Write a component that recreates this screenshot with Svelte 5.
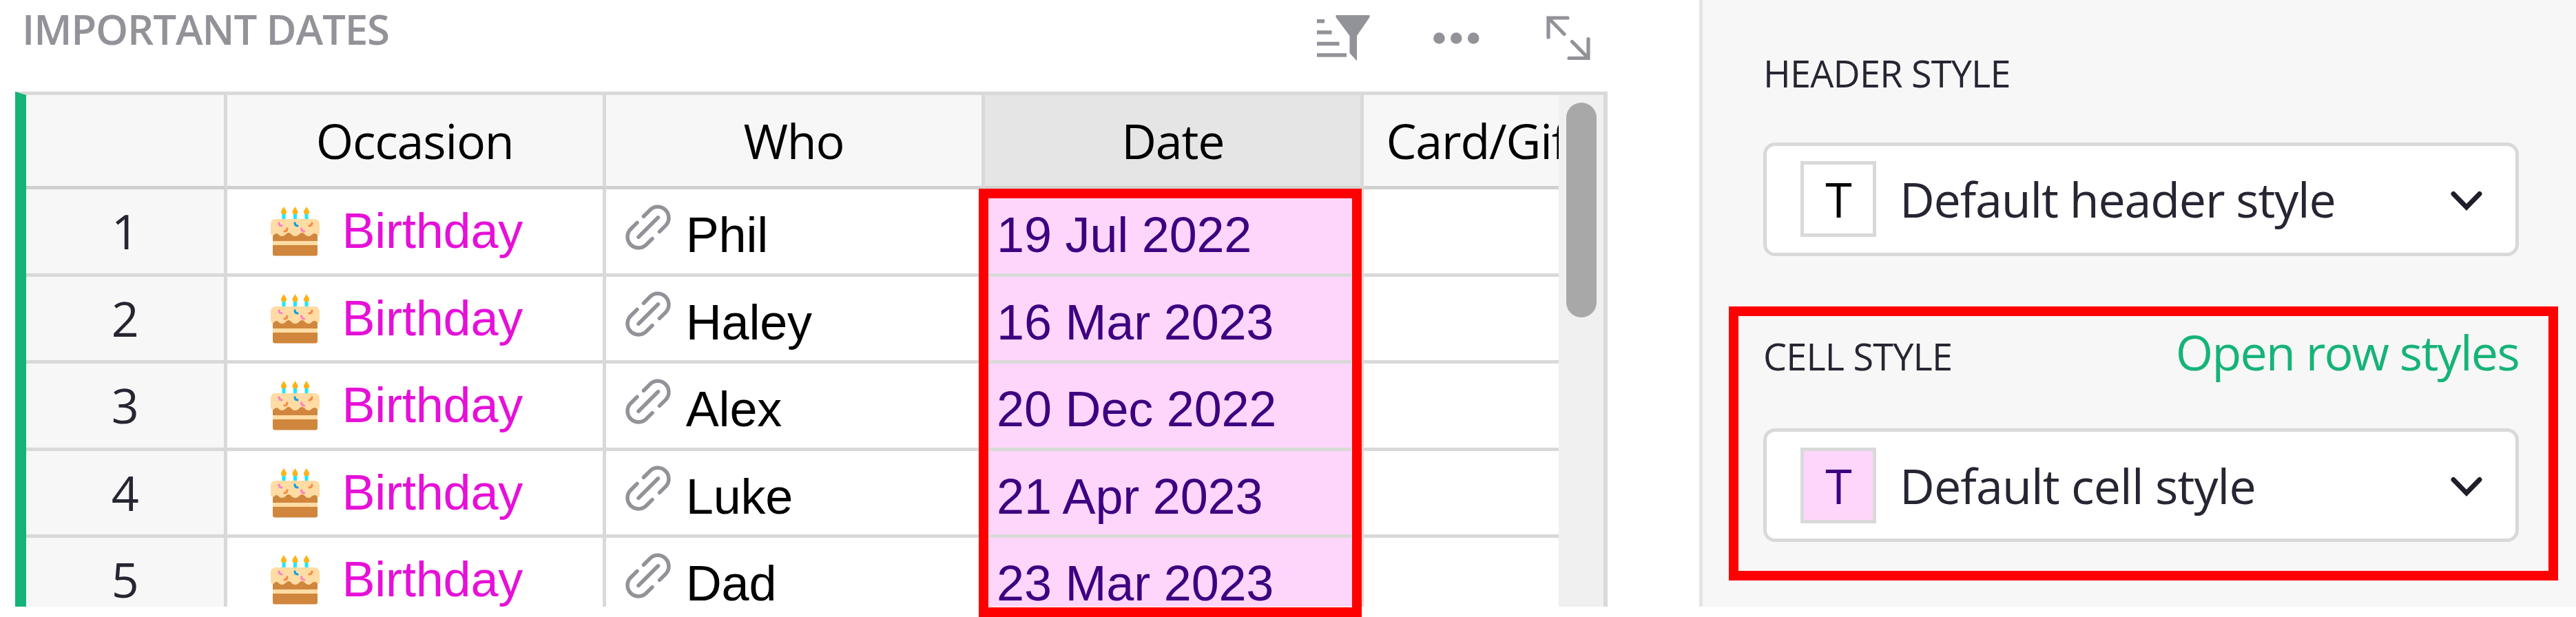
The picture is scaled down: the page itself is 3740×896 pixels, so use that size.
<script>
  const columns = ['Occasion', 'Who', 'Date'];
  const rows = [
    { who: 'Phil', date: '19 Jul 2022' },
    { who: 'Haley', date: '16 Mar 2023' },
    { who: 'Alex', date: '20 Dec 2022' },
    { who: 'Luke', date: '21 Apr 2023' },
    { who: 'Dad', date: '23 Mar 2023' }
  ];
</script>

{#snippet cake()}
  <svg class="cake" viewBox="0 0 71 72" width="71" height="72">
    <g fill="#ffb31a">
      <path d="M19 0c2 4 4 5 4 8a4 3.500 0 0 1-8 0c0-3 2-4 4-8z" />
      <path d="M35.500 0c2 4 4 5 4 8a4 3.500 0 0 1-8 0c0-3 2-4 4-8z" />
      <path d="M52 0c2 4 4 5 4 8a4 3.500 0 0 1-8 0c0-3 2-4 4-8z" />
    </g>
    <path fill="#20e8fc" d="M16.500 11h5v9h-5zM33 11h5v9h-5zM49.500 11h5v9h-5z" />
    <path fill="#d0863c" d="M3 36h65v32.500q0 3-3 3H6q-3 0-3-3z" />
    <path fill="#ffdca4" d="M3 50h65v6H3z" />
    <path fill="#ffdca4" d="M8 18h55q8 0 8 8v12q0 4-3 4-1-3-4.500-3c-4 0-4 4-8.500 4s-6-5-9.500-5-5 5-10 5-6-5-9.500-5-5 5-9.500 5-5-4-8-4-4 3-4.500 3Q0 42 0 38V26q0-8 8-8z" />
    <g fill="none" stroke-width="3.200" stroke-linecap="round" stroke-linejoin="round">
      <path stroke="#ff82c4" d="M12 24l1 3 3 1M44.500 32l1 3 3 1" />
      <path stroke="#109fe0" d="M35 24l1 3 3 1" />
      <path stroke="#fa8a48" d="M60 24l-1 3-3 1M24 32l-1 3-3 1" />
    </g>
  </svg>
{/snippet}

{#snippet link()}
  <svg class="link" viewBox="0 0 66 66" width="66" height="66">
    <path d="M26.500 17.200L36.200 7.500A16 16 0 0 1 58.800 30.100L49.500 39.400M47.500 18.800L19 47.300M17 26.400L7.200 36.200A16 16 0 0 0 29.800 58.800L39 49.600" />
  </svg>
{/snippet}

{#snippet styleSelect(label, kind)}
  <div class="select">
    <span class="swatch {kind}">T</span>
    <span class="select-label {kind}">{label}</span>
    <svg class="chevron" viewBox="0 0 46 30" width="46" height="30">
      <path d="M4 4.500L23 24 42 4.500" />
    </svg>
  </div>
{/snippet}

<div class="page">
  <main>
    <div class="titlebar">
      <h1>IMPORTANT DATES</h1>
      <div class="tools">
        <svg viewBox="0 0 77 67" width="77" height="67" fill="#929299">
          <path d="M0 6h11v5.500H0zM0 22.300h21.500v5.500H0zM0 38.800h32.500v5.500H0zM0 55.200h43v5.500H0z" />
          <path d="M27.500 0H76.500V3L58 30V66.500L47.500 55V30L27.500 3z" />
        </svg>
        <svg viewBox="0 0 67 17" width="67" height="17" fill="#929299">
          <circle cx="8.500" cy="8.500" r="8.300" /><circle cx="33.300" cy="8.500" r="8.300" /><circle cx="58.200" cy="8.500" r="8.300" />
        </svg>
        <svg class="expand" viewBox="0 0 64 65" width="64" height="65">
          <path d="M3 31V3H31M3 3L26 26.500M61 33.500V61.500H33M61 61.500L37.500 37.500" />
        </svg>
      </div>
    </div>

    <div class="frame">
      <div class="grid">
        <div class="row head">
          <div class="num"></div>
          {#each columns as name}
            <div class="cell" class:selected={name === 'Date'}>{name}</div>
          {/each}
          <div class="cell last">Card/Gift</div>
        </div>
        {#each rows as row, i}
          <div class="row">
            <div class="num">{i + 1}</div>
            <div class="cell occasion">{@render cake()}<span>Birthday</span></div>
            <div class="cell who">{@render link()}<span>{row.who}</span></div>
            <div class="cell date">{row.date}</div>
            <div class="cell last"></div>
          </div>
        {/each}
      </div>
      <div class="track"><div class="thumb"></div></div>
    </div>
    <div class="outline dates"></div>
  </main>

  <aside>
    <div class="heading first">HEADER STYLE</div>
    {@render styleSelect('Default header style', 'plain')}
    <div class="heading second"><span>CELL STYLE</span><a>Open row styles</a></div>
    {@render styleSelect('Default cell style', 'pink')}
    <div class="outline cells"></div>
  </aside>
</div>

<style>
  :global(body) { background: #fff; }
  .page {
    position: relative;
    display: flex;
    width: 3740px;
    height: 896px;
    overflow: hidden;
    font: 70px/1 "Open Sans", sans-serif;
    letter-spacing: -1.200px;
    color: #262633;
    white-space: nowrap;
  }
  svg { display: block; flex: none; }
  main { width: 2466.500px; height: 881px; box-sizing: border-box; padding-left: 22px; }
  .titlebar { display: flex; justify-content: space-between; height: 132.500px; padding: 0 157.500px 0 10px; }
  h1 { margin: 0; font-size: 60px; line-height: 85px; font-weight: 600; color: #929299; letter-spacing: -1.150px; }
  .tools { display: flex; align-items: center; height: 110px; }
  .tools svg:nth-child(2) { margin: 0 97px 0 92.500px; }
  .expand { fill: none; stroke: #929299; stroke-width: 5.200; stroke-linecap: round; }

  .frame {
    display: flex;
    box-sizing: border-box;
    width: 2312px;
    height: 748.500px;
    overflow: hidden;
    border: 5px solid #d9d9d9;
    border-left: 16.500px solid #16b378;
    border-right-width: 6px;
    border-bottom: 0;
  }
  .grid { width: 2225px; overflow: hidden; }
  .row {
    display: grid;
    grid-template-columns: 291.500px 550.300px 550.300px 550.300px 550.300px;
    grid-template-rows: 126.600px;
    height: 126.600px;
  }
  .row > div { box-sizing: border-box; border-right: 5px solid #d9d9d9; border-bottom: 5px solid #d9d9d9; }
  .row > .num { background: #f7f7f7; text-align: center; line-height: 121.600px; }
  .head { height: 137.500px; grid-template-rows: 137.500px; color: #000; }
  .head > div { background: #f7f7f7; text-align: center; line-height: 132.500px; border-bottom-color: #d0d0d0; }
  .head > .selected { background: #e5e5e5; }
  .head > .last { text-align: left; padding-left: 32px; }
  .occasion, .who { display: flex; align-items: flex-start; }
  .occasion, .who, .date { font-family: "Liberation Sans", sans-serif; font-size: 72px; letter-spacing: -0.200px; }
  .occasion { padding-left: 63px; color: #e610d8; }
  .occasion span { margin-left: 33px; line-height: 120px; }
  .cake { margin-top: 25px; }
  .who { padding-left: 28px; color: #000; }
  .who span { margin-left: 22px; line-height: 132px; }
  .link { margin-top: 21.500px; fill: none; stroke: #929299; stroke-width: 5.500; stroke-linecap: round; }
  .date { padding-left: 17px; line-height: 132px; color: #3d0080; background: #fed6fb; }

  .track { flex: 1; background: #f0f0f0; padding: 11px 10px 0 11px; }
  .thumb { height: 312px; border-radius: 22px; background: #a8a8a8; }

  aside { flex: 1; box-sizing: border-box; height: 881px; background: #f7f7f7; border-left: 5.500px solid #e4e4e4; padding: 0 83px 0 88.500px; }
  .heading { display: flex; justify-content: space-between; box-sizing: border-box; font-size: 54px; letter-spacing: -0.800px; }
  .first { height: 206.500px; line-height: 212px; }
  .second { height: 250.500px; line-height: 290px; }
  .heading a { font-size: 70px; line-height: 278px; letter-spacing: -1.750px; color: #16b378; }
  .select {
    display: flex;
    align-items: center;
    box-sizing: border-box;
    height: 165px;
    border: 5.500px solid #d9d9d9;
    border-radius: 17px;
    background: #fff;
    padding: 0 48px 0 49px;
  }
  .swatch { box-sizing: border-box; width: 110px; height: 110px; line-height: 100px; border: 5.500px solid #d9d9d9; text-align: center; color: #000; }
  .swatch.pink { background: #fed6fb; color: #3d0080; }
  .select-label { margin-left: 34px; }
  .select-label.pink { letter-spacing: -0.900px; }
  .chevron { margin: 5px 0 0 auto; fill: none; stroke: #1f1f2c; stroke-width: 7; stroke-linecap: round; }

  .outline { position: absolute; box-sizing: border-box; border: 14px solid #f00; }
  .dates { left: 1421px; top: 274px; width: 556px; height: 622px; }
  .cells { left: 2510px; top: 445px; width: 1204px; height: 398px; }
</style>
